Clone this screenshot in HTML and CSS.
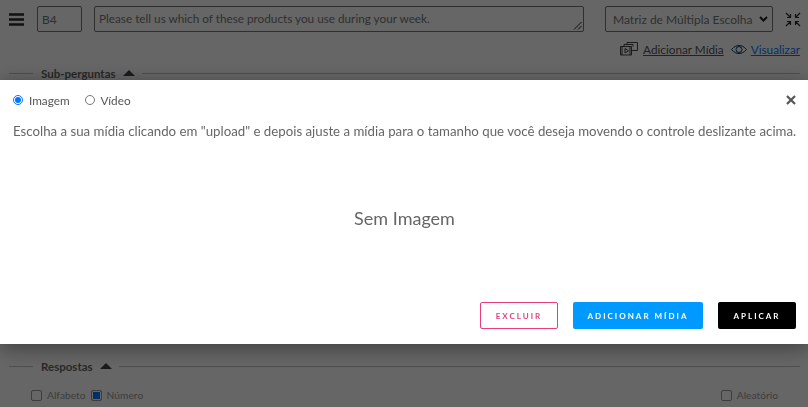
FILE: index.html
```html
<!DOCTYPE html>
<html lang="en">
<head>
  <meta charset="UTF-8">
  <meta name="viewport" content="width=device-width, initial-scale=1.0">
  <title>Adicionar Mídia</title>
  <link rel="stylesheet" href="styles.css">
</head>
<body>
  <!-- Question editor behind the overlay -->
  <div class="editor">
    <div class="question-row">
      <svg class="menu-icon" width="16" height="13" viewBox="0 0 16 13">
        <path d="M0 1.500h15M0 6.500h15M0 11.500h15" stroke="#2b2b2b" stroke-width="2.400" fill="none"/>
      </svg>
      <input class="code-input" type="text" value="B4">
      <div class="question-text">Please tell us which of these products you use during your week.
        <svg class="grip" width="9" height="9" viewBox="0 0 9 9">
          <path d="M1 8.500 8.500 1M5 8.500 8.500 5" stroke="#222" stroke-width="1" fill="none"/>
        </svg>
      </div>
      <div class="type-select">
        <span>Matriz de Múltipla Escolha</span>
        <svg width="9" height="6" viewBox="0 0 9 6">
          <path d="M1 1l3.500 3.500L8 1" stroke="#222" stroke-width="2" fill="none"/>
        </svg>
      </div>
      <svg class="collapse-icon" width="16" height="15" viewBox="0 0 16 15">
        <path d="M1 1l4 4M5.500 2v3.500H2M15 1l-4 4M10.500 2v3.500H14M1 14l4-4M5.500 13v-3.500H2M15 14l-4-4M10.500 13v-3.500H14" stroke="#2b2b2b" stroke-width="1.200" fill="none"/>
      </svg>
    </div>
    <div class="action-row">
      <svg class="media-icon" width="18" height="14" viewBox="0 0 18 14">
        <path d="M.5 4.500h11v8.500h-11zM4 4.500V2.500h9v2M7 2.500V.5h10.500v8h-5.500M2 4.500V13M10 4.500V13M5 6.500v4.500l3.500-2.200z" stroke="#333" stroke-width=".9" fill="none"/>
      </svg>
      <a class="action-link" href="#">Adicionar Mídia</a>
      <svg class="eye-icon" width="16" height="9" viewBox="0 0 16 9">
        <path d="M.5 4.500C3 1.500 5.500.5 8 .5s5 1 7.500 4C13 7.500 10.500 8.500 8 8.500S3 7.500.5 4.500z" stroke="#0a3f66" fill="none"/>
        <circle cx="8" cy="4.500" r="3" stroke="#0a3f66" fill="none"/>
      </svg>
      <a class="action-link action-link-blue" href="#">Visualizar</a>
    </div>
    <div class="section-head section-head-sub">
      <span class="section-title">Sub-perguntas</span>
      <span class="caret"></span>
    </div>
    <div class="section-head section-head-answers">
      <span class="section-title">Respostas</span>
      <span class="caret"></span>
    </div>
    <div class="option-row">
      <span class="check"></span><span class="option-label">Alfabeto</span>
      <span class="check check-on"></span><span class="option-label">Número</span>
      <span class="check check-right"></span><span class="option-label">Aleatório</span>
    </div>
  </div>

  <div class="overlay"></div>

  <!-- Media dialog -->
  <div class="modal">
    <div class="modal-top">
      <label class="radio-label"><input type="radio" name="media" checked> Imagem</label>
      <label class="radio-label"><input type="radio" name="media"> Vídeo</label>
      <svg class="close-icon" width="10" height="10" viewBox="0 0 10 10">
        <path d="M1 1l8 8M9 1l-8 8" stroke="#555" stroke-width="2.200" fill="none"/>
      </svg>
    </div>
    <p class="modal-help">Escolha a sua mídia clicando em "upload" e depois ajuste a mídia para o tamanho que você deseja movendo o controle deslizante acima.</p>
    <div class="no-image">Sem Imagem</div>
    <div class="modal-buttons">
      <button class="btn btn-delete">EXCLUIR</button>
      <button class="btn btn-add">ADICIONAR MÍDIA</button>
      <button class="btn btn-apply">APLICAR</button>
    </div>
  </div>
</body>
</html>
```

FILE: styles.css
```css
html, body {
  height: 100%;
}
body {
  margin: 0;
  overflow: hidden;
  background: #fff;
  font-family: Lato, "Noto Sans", Arial, sans-serif;
  font-size: 12px;
  color: #777;
}
.editor {
  padding: 6px 8px 0 9px;
}
.question-row {
  display: flex;
  align-items: center;
  height: 26px;
}
.menu-icon {
  flex: none;
  margin-right: 12px;
}
.code-input {
  flex: none;
  width: 45px;
  height: 26px;
  box-sizing: border-box;
  border: 1px solid #777;
  border-radius: 2px;
  padding: 0 4px;
  background: #fff;
  font: inherit;
  color: #777;
  margin-right: 12px;
}
.question-text {
  flex: none;
  position: relative;
  width: 490px;
  height: 26px;
  box-sizing: border-box;
  border: 1px solid #777;
  border-radius: 2px;
  padding: 0 4px;
  line-height: 24px;
  font-size: 11.750px;
  margin-right: 21px;
}
.grip {
  position: absolute;
  right: 1px;
  bottom: 1px;
}
.type-select {
  flex: none;
  display: flex;
  align-items: center;
  justify-content: space-between;
  width: 168px;
  height: 26px;
  box-sizing: border-box;
  border: 1px solid #777;
  border-radius: 2px;
  padding: 0 4px 0 7px;
  font-size: 12px;
  margin-right: 12px;
}
.collapse-icon {
  flex: none;
}
.action-row {
  display: flex;
  align-items: center;
  justify-content: flex-end;
  height: 16px;
  margin-top: 9px;
}
.media-icon {
  margin-right: 5px;
}
.action-link {
  color: #555;
  font-size: 11.750px;
}
.action-link-blue {
  color: #007bff;
}
.eye-icon {
  margin: 0 4px 0 7px;
}
.section-head {
  display: flex;
  align-items: center;
  gap: 7px;
  height: 16px;
}
.section-head::before {
  content: "";
  width: 24px;
  height: 1px;
  margin-right: 1px;
  background: #c4c4c4;
}
.section-head::after {
  content: "";
  flex: 1;
  height: 1px;
  background: #c4c4c4;
}
.section-head-sub {
  margin-top: 8px;
}
.section-head-answers {
  margin-top: 277px;
}
.section-title {
  font-weight: 700;
  font-size: 11.500px;
  color: #666;
}
.caret {
  width: 0;
  height: 0;
  border-left: 6px solid transparent;
  border-right: 6px solid transparent;
  border-bottom: 6px solid #444;
}
.option-row {
  display: flex;
  align-items: center;
  margin-top: 15px;
  padding-left: 22px;
  font-size: 10.250px;
  color: #999;
}
.check {
  width: 9px;
  height: 9px;
  border: 1px solid #999;
  border-radius: 2px;
  margin-right: 5px;
}
.check-on {
  margin-left: 5px;
  background: #007bff;
  box-shadow: inset 0 0 0 1px #fff;
}
.check-right {
  margin-left: auto;
}
.option-row .option-label:last-child {
  margin-right: 22px;
}
.overlay {
  position: fixed;
  inset: 0;
  background: rgba(0, 0, 0, 0.6);
}
.modal {
  position: fixed;
  left: 0;
  right: 0;
  top: 80px;
  height: 264px;
  box-sizing: border-box;
  padding: 13px 12px 15px 13px;
  display: flex;
  flex-direction: column;
  background: #fff;
  box-shadow: 0 4px 20px rgba(0, 0, 0, 0.4);
}
.modal-top {
  display: flex;
  align-items: center;
  height: 14px;
}
.radio-label {
  display: flex;
  align-items: center;
  gap: 6px;
  margin-right: 15px;
  font-size: 11.750px;
  color: #555;
}
.radio-label input {
  width: 10px;
  height: 10px;
  margin: 0;
}
.close-icon {
  margin-left: auto;
}
.modal-help {
  margin: 16px 0 0;
  font-size: 13.250px;
  line-height: 16px;
  color: #666;
  white-space: nowrap;
}
.no-image {
  flex: 1;
  display: flex;
  align-items: center;
  justify-content: center;
  padding-bottom: 5px;
  font-size: 18px;
  color: #666;
}
.modal-buttons {
  display: flex;
  justify-content: flex-end;
  gap: 15px;
}
.btn {
  height: 27px;
  border: 1px solid transparent;
  border-radius: 2px;
  font-family: inherit;
  font-size: 8px;
  font-weight: 700;
  letter-spacing: 2px;
}
.btn-delete {
  width: 78px;
  border-color: #e83e7b;
  background: #fff;
  color: #e83e7b;
}
.btn-add {
  width: 130px;
  background: #0099ff;
  color: #fff;
}
.btn-apply {
  width: 78px;
  background: #000;
  color: #fff;
}
```
